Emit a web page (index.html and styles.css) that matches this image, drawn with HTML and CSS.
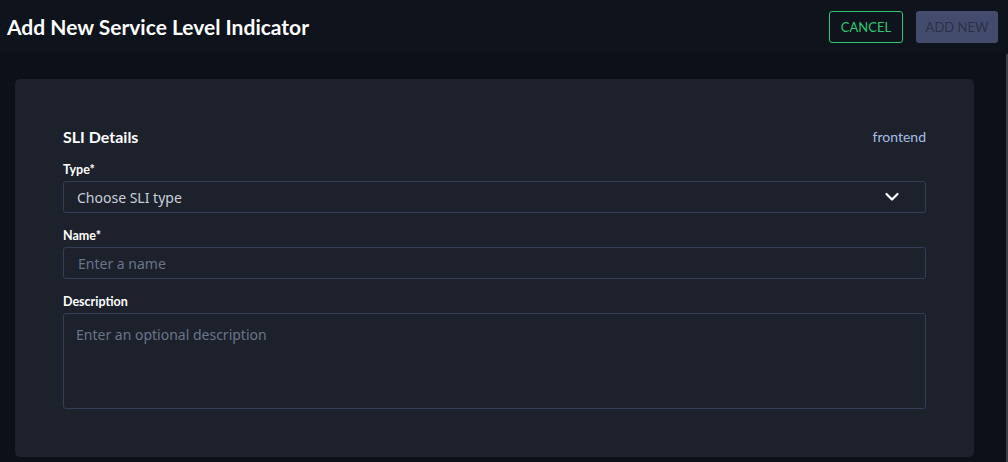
FILE: index.html
```html
<!doctype html>
<html>
 <head>
  <link rel="stylesheet" href="styles.css">
 </head>
 <body>
  <div class="cabecera">
   <h1>Add New Service Level Indicator</h1>
   <div class="acciones">
    <button class="btn-cancelar">CANCEL</button>
    <button class="btn-agregar" disabled>ADD NEW</button>
   </div>
  </div>
  <div class="contenido">
   <div class="tarjeta">
    <div class="tarjeta-titulo">
     <h2>SLI Details</h2>
     <span class="servicio">frontend</span>
    </div>
    <label class="etiqueta">Type*</label>
    <div class="selector">
     <span>Choose SLI type</span>
     <svg width="14" height="10" viewBox="0 0 14 10"><path d="M1.5 2 L7 7.5 L12.5 2" fill="none" stroke="#fff" stroke-width="2.2" stroke-linecap="round" stroke-linejoin="round"/></svg>
    </div>
    <label class="etiqueta">Name*</label>
    <input class="campo" type="text" placeholder="Enter a name">
    <label class="etiqueta">Description</label>
    <textarea class="campo area" placeholder="Enter an optional description"></textarea>
   </div>
  </div>
 </body>
</html>
```
FILE: styles.css
```css
body {
    margin: 0;
    height: 462px;
    overflow: hidden;
    background-color: #0c1119; /* Fondo oscuro */
    font-family: "Open Sans", "Noto Sans", sans-serif;
    color: #fff;
    display: flex;
    flex-direction: column;
}
.cabecera {
    height: 53px;
    background-color: #0e131c;
    display: flex;
    align-items: center;
    justify-content: space-between;
    padding: 0 10px 0 7px;
}
h1 {
    margin: 0;
    font-family: "Lato", "Open Sans", sans-serif;
    font-size: 21px;
    font-weight: 700;
}
.acciones {
    display: flex;
    gap: 13px;
}
button {
    height: 32px;
    border-radius: 3px;
    font-family: "Lato", sans-serif;
    font-size: 13px;
    padding: 0;
    white-space: nowrap;
}
.btn-cancelar {
    background: transparent;
    border: 1px solid #2ec76f;
    color: #2ec76f;
    width: 74px;
}
.btn-agregar {
    background-color: #434c6d;
    border: none;
    color: #2a3049;
    width: 82px;
}
.contenido {
    flex: 1;
    padding: 25px 32px 0 15px;
    border-right: 2px solid #3a3f48;
    margin-top: 1px;
}
.tarjeta {
    background-color: #1d212c;
    border-radius: 5px;
    height: 378px;
    box-sizing: border-box;
    padding: 48px 48px 0 48px;
    display: flex;
    flex-direction: column;
}
.tarjeta-titulo {
    display: flex;
    justify-content: space-between;
    align-items: center;
    margin-bottom: 16px;
}
h2 {
    margin: 0;
    font-family: "Lato", sans-serif;
    font-size: 16px;
    font-weight: 700;
}
.servicio {
    font-family: "Lato", sans-serif;
    font-size: 14px;
    color: #a8bde6;
}
.etiqueta {
    font-family: "Lato", sans-serif;
    font-size: 12.5px;
    font-weight: 700;
    margin-bottom: 3px;
    line-height: 16px;
}
.selector, .campo {
    box-sizing: border-box;
    height: 32px;
    border: 1px solid #343e55;
    border-radius: 3px;
    background-color: #1d212c;
    font-family: "Noto Sans", sans-serif;
    font-size: 14px;
    margin-bottom: 15px;
}
.selector {
    display: flex;
    align-items: center;
    justify-content: space-between;
    padding: 0 26px 0 13px;
    color: #c9cfdb;
}
.campo {
    width: 100%;
    padding: 0 14px;
    color: #fff;
    outline: none;
}
.campo::placeholder {
    color: #69758a;
}
.area {
    height: 96px;
    padding: 11px 12px;
    resize: none;
    margin-bottom: 0;
}
```
